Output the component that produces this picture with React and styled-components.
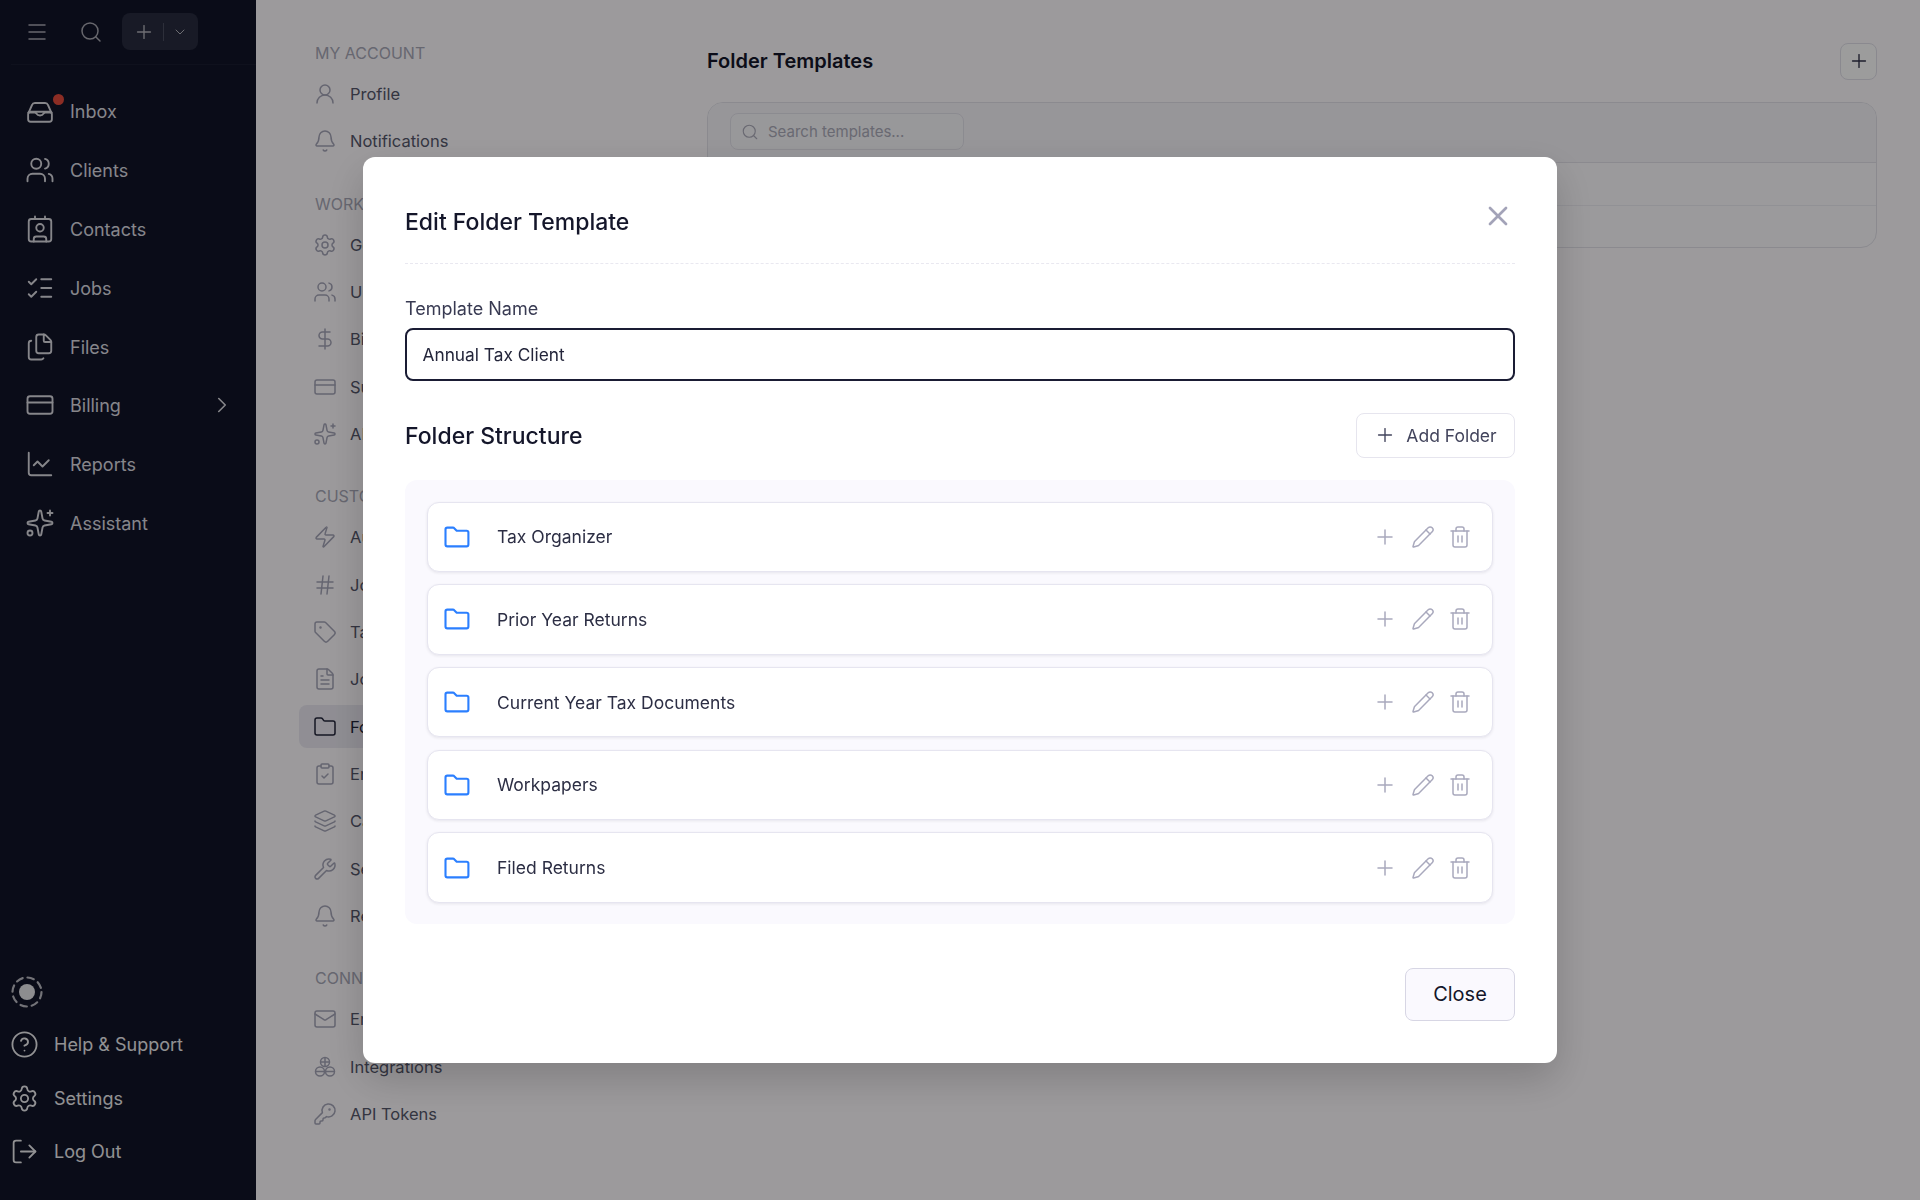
import React from "react";
import styled, { createGlobalStyle } from "styled-components";
import {
  Menu, Search, Plus, ChevronDown, ChevronRight, Users, Contact, ListChecks, Files, CreditCard,
  ChartLine, Sparkles, CircleHelp, Settings, LogOut, UserRound, Bell, DollarSign, Zap, Hash, Tag,
  FileText, Folder, ClipboardCheck, Layers, Wrench, Mail, KeyRound, X, Pencil, Trash2,
} from "lucide-react";

const FONT = `"Inter", "Noto Sans", "Liberation Sans", sans-serif`;

const Global = createGlobalStyle`
  html, body { margin: 0; padding: 0; background: #fff; }
  body { font-family: ${FONT}; }
  * { box-sizing: border-box; }
`;

const Page = styled.div`
  display: flex;
  width: 1920px;
  height: 1200px;
  overflow: hidden;
  background: #fffcff;
`;

const Sidebar = styled.aside`
  width: 256px;
  flex: none;
  background: #111428;
  display: flex;
  flex-direction: column;
  color: #e4e4e8;
`;

const TopBar = styled.div`
  height: 65px;
  margin-left: 11px;
  padding: 0 0 1px 14px;
  border-bottom: 1px solid #191c30;
  display: flex;
  align-items: center;
  gap: 16px;
  color: #a9a9b2;
`;

const SearchSlot = styled.div`
  display: flex;
  margin-left: 14px;
`;

const AddSplit = styled.div`
  width: 76px;
  height: 37px;
  margin-left: 3px;
  border-radius: 8px;
  background: #282b3e;
  display: flex;
  align-items: center;
  padding-left: 11px;
  color: #b4b4bc;
`;

const SplitRule = styled.span`
  width: 1px;
  height: 18px;
  background: #4a4d60;
  margin: 0 8px;
`;

const MainNav = styled.nav`
  padding-top: 17px;
  display: flex;
  flex-direction: column;
`;

const MainItem = styled.div`
  position: relative;
  height: 58.8px;
  padding: 0 21px 0 25px;
  display: flex;
  align-items: center;
  gap: 15px;
  font-size: 18px;
  color: #dcdce2;
`;

const MainLabel = styled.span`
  padding-top: 1px;
`;

const Grow = styled.span`
  flex: 1;
`;

const Dot = styled.span`
  position: absolute;
  left: 53px;
  top: 12px;
  width: 11px;
  height: 11px;
  border-radius: 50%;
  background: #e54b3c;
`;

const BottomNav = styled.div`
  margin-top: auto;
  padding: 0 0 22px 10px;
  display: flex;
  flex-direction: column;
`;

const LogoSlot = styled.div`
  height: 42px;
  display: flex;
  align-items: flex-start;
  margin-left: 1px;
`;

const BottomItem = styled.div`
  height: 53.3px;
  display: flex;
  align-items: center;
  gap: 15px;
  font-size: 18px;
  color: #eeeef0;
`;

const SubNav = styled.nav`
  width: 451px;
  flex: none;
  padding: 43px 24px 0 43px;
  display: flex;
  flex-direction: column;
  gap: 31px;
`;

const Section = styled.section`
  display: flex;
  flex-direction: column;
  gap: 4.3px;
`;

const SectionLabel = styled.div`
  height: 20px;
  margin-bottom: 5.2px;
  padding-left: 16px;
  font-size: 16px;
  line-height: 20px;
  color: #a8a8b8;
`;

const SubItem = styled.div`
  height: 43px;
  padding-left: 14px;
  border-radius: 8px;
  display: flex;
  align-items: center;
  gap: 13px;
  font-size: 16.5px;
  color: ${(p) => (p.$active ? "#23253a" : "#55576b")};
  background: ${(p) => (p.$active ? "#ebe9f2" : "transparent")};
  svg { color: ${(p) => (p.$active ? "#23253a" : "#a5a5b8")}; flex: none; }
`;

const Main = styled.main`
  flex: 1;
  padding: 43px 43px 0 0;
`;

const MainHead = styled.header`
  height: 36px;
  margin-bottom: 23px;
  display: flex;
  align-items: center;
  justify-content: space-between;
`;

const MainTitle = styled.h1`
  margin: 0;
  font-size: 20px;
  font-weight: 600;
  color: #14162a;
`;

const SquareButton = styled.button`
  width: 37px;
  height: 37px;
  padding: 0;
  border: 1.5px solid #e2e1ea;
  border-radius: 8px;
  background: #fff;
  color: #30324a;
  display: flex;
  align-items: center;
  justify-content: center;
`;

const Card = styled.div`
  height: 146px;
  border: 1.5px solid #e3e2ea;
  border-radius: 16px;
  overflow: hidden;
  background: #fdfcff;
`;

const CardSearch = styled.div`
  height: 60px;
  padding: 10px 22px;
  background: #f7f6fb;
  border-bottom: 1.5px solid #e3e2ea;
`;

const SearchBox = styled.div`
  width: 234px;
  height: 37px;
  padding-left: 10px;
  border: 1.5px solid #e4e3ec;
  border-radius: 8px;
  background: #f9f8fc;
  display: flex;
  align-items: center;
  gap: 9px;
  font-size: 15px;
  color: #acacba;
`;

const CardRow = styled.div`
  height: 43px;
  border-bottom: 1px solid #eeedf4;
`;

const Overlay = styled.div`
  position: fixed;
  inset: 0;
  background: rgba(0, 0, 0, 0.39);
  padding: 157px 0 0 363px;
  font-family: ${FONT};
`;

const Modal = styled.div`
  width: 1194px;
  height: 906px;
  padding: 42px 42px 0;
  border-radius: 12px;
  background: #fff;
  box-shadow: 0 16px 40px rgba(0, 0, 0, 0.18);
`;

const ModalHead = styled.header`
  height: 64.5px;
  padding-bottom: 20px;
  border-bottom: 1.5px dashed #e9e8f0;
  display: flex;
  align-items: center;
  justify-content: space-between;
`;

const ModalTitle = styled.h2`
  margin: 2px 0 0;
  font-size: 23px;
  font-weight: 500;
  color: #14162a;
`;

const CloseIcon = styled.button`
  width: 40px;
  height: 40px;
  margin: -10px -3px 0 0;
  padding: 0;
  border: 0;
  background: none;
  color: #a3a3b8;
  display: flex;
  align-items: center;
  justify-content: center;
`;

const FieldLabel = styled.label`
  display: block;
  height: 22px;
  margin: 34px 0 8px;
  font-size: 18px;
  line-height: 22px;
  color: #383a52;
`;

const NameInput = styled.input`
  display: block;
  width: 100%;
  height: 53px;
  padding: 0 15.5px;
  border: 2px solid #1a1c34;
  border-radius: 8px;
  font-family: ${FONT};
  font-size: 17.3px;
  color: #23253a;
  background: #fff;
  outline: none;
`;

const StructureHead = styled.div`
  height: 45px;
  margin: 32px 0 22px;
  display: flex;
  align-items: center;
  justify-content: space-between;
`;

const StructureTitle = styled.h3`
  margin: 2px 0 0;
  font-size: 23px;
  font-weight: 450;
  color: #14162a;
`;

const AddFolder = styled.button`
  width: 159px;
  height: 45px;
  padding: 0;
  border: 1.5px solid #e6e5ee;
  border-radius: 8px;
  background: #fff;
  font-family: ${FONT};
  font-size: 17.5px;
  color: #42445c;
  display: flex;
  align-items: center;
  justify-content: center;
  gap: 10px;
`;

const FolderPanel = styled.div`
  height: 444px;
  padding: 22px;
  border-radius: 12px;
  background: #faf9fe;
  display: flex;
  flex-direction: column;
  gap: 12.2px;
`;

const FolderRow = styled.div`
  height: 70.5px;
  flex: none;
  padding: 0 20px 0 16px;
  border: 1.5px solid #e6e5f0;
  border-radius: 12px;
  background: #fff;
  box-shadow: 0 1px 3px rgba(30, 30, 60, 0.09);
  display: flex;
  align-items: center;
  gap: 27px;
  font-size: 17.5px;
  color: #2c2e44;
`;

const FolderName = styled.span`
  flex: 1;
`;

const RowActions = styled.div`
  display: flex;
  gap: 13.5px;
  color: #a9a9bd;
`;

const Footer = styled.footer`
  margin-top: 44px;
  display: flex;
  justify-content: flex-end;
`;

const CloseButton = styled.button`
  width: 110px;
  height: 53px;
  padding: 0;
  border: 1.5px solid #d7d6e4;
  border-radius: 8px;
  background: #faf9fe;
  font-family: ${FONT};
  font-size: 20px;
  font-weight: 400;
  color: #14162a;
`;

const InboxIcon = ({ size = 30 }) => (
  <svg width={size} height={size} viewBox="0 -0.6 24 24" fill="none" stroke="currentColor" strokeWidth="1.5" strokeLinecap="round" strokeLinejoin="round">
    <path d="M3 12.5 5.6 6.6A2.5 2.5 0 0 1 7.9 5h8.2a2.5 2.5 0 0 1 2.3 1.6l2.6 5.9" />
    <rect x="2.5" y="12" width="19" height="8" rx="2" />
    <path d="M2.8 12.6h5c.5 0 1 .3 1.3.8.6 1 1.6 1.6 2.9 1.6s2.3-.6 2.9-1.6c.3-.5.8-.8 1.3-.8h5" />
  </svg>
);

const LogoMark = () => (
  <svg width="32" height="32" viewBox="0 0 32 32" fill="none">
    <circle cx="16" cy="16" r="14.5" stroke="#bdbdc4" strokeWidth="2.2" strokeDasharray="6.5 4.9" strokeLinecap="round" />
    <circle cx="16" cy="16" r="8" fill="#e6e6ea" />
  </svg>
);

const BlocksIcon = () => (
  <svg width="24" height="24" viewBox="0 0 24 24" fill="none" stroke="currentColor" strokeWidth="1.5" strokeLinejoin="round">
    <circle cx="12" cy="7" r="4.5" />
    <circle cx="7" cy="16.5" r="4.5" />
    <circle cx="17" cy="16.5" r="4.5" />
    <path d="M12 2.5v9M7.5 7h9M2.5 16.5h9M12.5 16.5h9" />
  </svg>
);

const BlueFolder = () => (
  <svg width="26" height="22" viewBox="0 0 26 22" fill="none" stroke="#2b7fff" strokeWidth="2.1" strokeLinejoin="round">
    <path d="M1.5 3.4c0-1 .8-1.8 1.8-1.8h5.6c.5 0 1 .2 1.3.6l2.5 2.6h9.9c1 0 1.8.8 1.8 1.8v12c0 1-.8 1.8-1.8 1.8H3.3c-1 0-1.8-.8-1.8-1.8Z" />
  </svg>
);

const mainItems = [
  { label: "Inbox", Icon: InboxIcon, dot: true },
  { label: "Clients", Icon: Users },
  { label: "Contacts", Icon: Contact },
  { label: "Jobs", Icon: ListChecks },
  { label: "Files", Icon: Files },
  { label: "Billing", Icon: CreditCard, chevron: true },
  { label: "Reports", Icon: ChartLine },
  { label: "Assistant", Icon: Sparkles },
];

const bottomItems = [
  { label: "Help & Support", Icon: CircleHelp },
  { label: "Settings", Icon: Settings },
  { label: "Log Out", Icon: LogOut },
];

const sections = [
  { title: "MY ACCOUNT", items: [["Profile", UserRound], ["Notifications", Bell]] },
  {
    title: "WORKSPACE",
    items: [["General", Settings], ["Users", Users], ["Billing", DollarSign], ["Subscription", CreditCard], ["AI", Sparkles]],
  },
  {
    title: "CUSTOMIZATION",
    items: [
      ["Automations", Zap], ["Job Numbers", Hash], ["Tags", Tag], ["Job Templates", FileText],
      ["Folder Templates", Folder, true], ["Engagements", ClipboardCheck], ["Categories", Layers],
      ["Services", Wrench], ["Reminders", Bell],
    ],
  },
  { title: "CONNECTIONS", items: [["Email", Mail], ["Integrations", BlocksIcon], ["API Tokens", KeyRound]] },
];

const folders = ["Tax Organizer", "Prior Year Returns", "Current Year Tax Documents", "Workpapers", "Filed Returns"];

export default function App() {
  return (
    <>
      <Global />
      <Page>
        <Sidebar>
          <TopBar>
            <Menu size={24} strokeWidth={1.5} />
            <SearchSlot><Search size={24} strokeWidth={1.5} /></SearchSlot>
            <AddSplit>
              <Plus size={22} strokeWidth={1.5} />
              <SplitRule />
              <ChevronDown size={16} strokeWidth={1.5} />
            </AddSplit>
          </TopBar>
          <MainNav>
            {mainItems.map(({ label, Icon, dot, chevron }) => (
              <MainItem key={label}>
                <Icon size={30} strokeWidth={1.5} />
                <MainLabel>{label}</MainLabel>
                {dot && <Dot />}
                {chevron && (
                  <>
                    <Grow />
                    <ChevronRight size={26} strokeWidth={1.5} />
                  </>
                )}
              </MainItem>
            ))}
          </MainNav>
          <BottomNav>
            <LogoSlot><LogoMark /></LogoSlot>
            {bottomItems.map(({ label, Icon }) => (
              <BottomItem key={label}>
                <Icon size={29} strokeWidth={1.5} />
                {label}
              </BottomItem>
            ))}
          </BottomNav>
        </Sidebar>
        <SubNav>
          {sections.map((s) => (
            <Section key={s.title}>
              <SectionLabel>{s.title}</SectionLabel>
              {s.items.map(([label, Icon, active]) => (
                <SubItem key={label} $active={active}>
                  <Icon size={24} strokeWidth={1.5} />
                  {label}
                </SubItem>
              ))}
            </Section>
          ))}
        </SubNav>
        <Main>
          <MainHead>
            <MainTitle>Folder Templates</MainTitle>
            <SquareButton><Plus size={22} strokeWidth={1.5} /></SquareButton>
          </MainHead>
          <Card>
            <CardSearch>
              <SearchBox>
                <Search size={18} strokeWidth={1.5} />
                Search templates...
              </SearchBox>
            </CardSearch>
            <CardRow />
            <CardRow />
          </Card>
        </Main>
      </Page>
      <Overlay>
        <Modal>
          <ModalHead>
            <ModalTitle>Edit Folder Template</ModalTitle>
            <CloseIcon><X size={32} strokeWidth={2} /></CloseIcon>
          </ModalHead>
          <FieldLabel>Template Name</FieldLabel>
          <NameInput defaultValue="Annual Tax Client" />
          <StructureHead>
            <StructureTitle>Folder Structure</StructureTitle>
            <AddFolder><Plus size={22} strokeWidth={1.5} />Add Folder</AddFolder>
          </StructureHead>
          <FolderPanel>
            {folders.map((name) => (
              <FolderRow key={name}>
                <BlueFolder />
                <FolderName>{name}</FolderName>
                <RowActions>
                  <Plus size={24} strokeWidth={1.5} />
                  <Pencil size={24} strokeWidth={1.5} />
                  <Trash2 size={24} strokeWidth={1.5} />
                </RowActions>
              </FolderRow>
            ))}
          </FolderPanel>
          <Footer>
            <CloseButton>Close</CloseButton>
          </Footer>
        </Modal>
      </Overlay>
    </>
  );
}
